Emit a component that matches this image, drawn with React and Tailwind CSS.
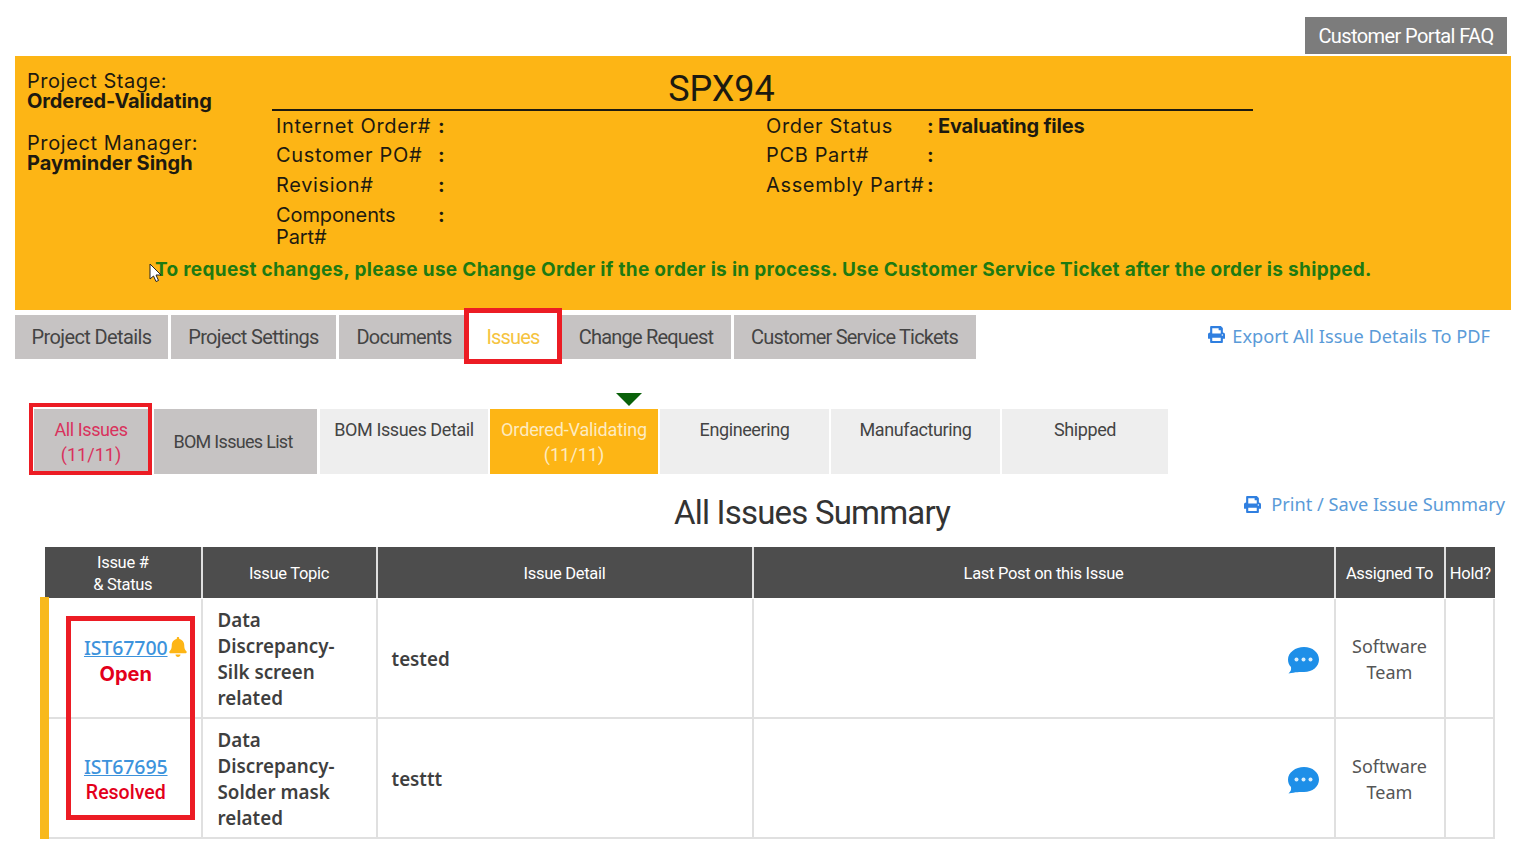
import React from "react";
import { FaPrint, FaBell } from "react-icons/fa";

const narrow = "font-['Roboto',sans-serif]";
const wide = "font-['Inter','Noto_Sans',sans-serif]";
const noto = "font-['Noto_Sans','Open_Sans',sans-serif]";
const cols = "grid grid-cols-[157.500px_175px_376px_582px_110px_49.500px]";

function InfoRow({ label, className = "", children }) {
  return (
    <div className={`flex ${className}`}>
      <span className="w-[162px] leading-[22px]">{label}</span>
      {children}
    </div>
  );
}

function Chat() {
  return (
    <svg width="33" height="28" viewBox="0 0 33 28" className="shrink-0">
      <path d="M17 1C25.5 1 32 6.500 32 13.500C32 20.500 25.500 26 17 26C12.500 26 9 26 1.500 27.500C3.500 25.500 4.500 24 4 21C2 19 1 16.500 1 13.500C1 6.500 8.500 1 17 1Z" fill="#1e8fe8" />
      <circle cx="9.500" cy="13.500" r="2" fill="#d9eefc" />
      <circle cx="16.500" cy="13.500" r="2" fill="#d9eefc" />
      <circle cx="23.500" cy="13.500" r="2" fill="#d9eefc" />
    </svg>
  );
}

function Row({ id, status, topic, detail, bell, className = "" }) {
  return (
    <div className={`${cols} h-[120px] border-b-2 border-[#e0e0e0] ${className}`}>
      <div className={`border-r-2 border-[#e0e0e0] flex flex-col items-center ${bell ? "pt-[36px]" : "pt-[35px]"} pl-[6px]`}>
        <div className="relative">
          <a className={`${noto} font-medium text-[19.500px] tracking-[-0.1px] leading-[26px] text-[#3d93dc] underline`}>{id}</a>
          {bell && <FaBell className="absolute left-[84px] top-[2px] text-[#fdb515] text-[20px]" />}
        </div>
        {status}
      </div>
      <div className={`border-r-2 border-[#e0e0e0] pl-[15px] pt-[8px] pr-2 ${noto} font-semibold text-[18.800px] leading-[26px] text-[#3f3f3f]`}>
        {topic.map((t) => <div key={t}>{t}</div>)}
      </div>
      <div className={`border-r-2 border-[#e0e0e0] pl-[14px] pt-[3px] flex items-center ${noto} font-semibold text-[18.800px] text-[#3f3f3f]`}>
        {detail}
      </div>
      <div className="border-r-2 border-[#e0e0e0] flex items-center justify-end pr-[14px] pt-[3px]">
        <Chat />
      </div>
      <div className={`border-r-2 border-[#e0e0e0] pt-[1px] flex flex-col items-center justify-center ${noto} text-[18px] leading-[26px] text-[#555555]`}>
        <div>Software</div>
        <div>Team</div>
      </div>
      <div className="border-r-2 border-[#e0e0e0]" />
    </div>
  );
}

function SubTab({ children, sub, className = "" }) {
  return (
    <div className={`h-[65px] flex flex-col items-center text-[18px] ${narrow} ${className}`}>
      <div className="leading-[25px]">{children}</div>
      {sub && <div className="leading-[25px] tracking-[0px]">{sub}</div>}
    </div>
  );
}

export default function App() {
  return (
    <div className="w-[1521px] h-[845px] overflow-hidden bg-white relative">
      <div className="flex justify-end pt-[17px] pr-[14px] h-[56px]">
        <div className={`w-[202px] h-[37px] bg-[#7c7c7c] text-white text-[20px] tracking-[-0.6px] ${narrow} flex items-center justify-center`}>
          Customer Portal FAQ
        </div>
      </div>

      <div className="mx-[15px] w-[1496px] h-[254px] bg-[#fdb515] relative text-[#1d1a10]">
        <div className="flex">
          <div className={`w-[257px] pl-[12px] pt-[15px] ${wide} text-[20px] leading-[20px]`}>
            <div className="tracking-[0.55px]">Project Stage:</div>
            <div className="font-bold tracking-[-0.1px]">Ordered-Validating</div>
            <div className="mt-[22px] tracking-[0.6px]">Project Manager:</div>
            <div className="font-bold">Payminder Singh</div>
          </div>
          <div className="w-[981px]">
            <div className={`h-[55px] border-b-2 border-[#1d1a10] flex items-end justify-center pr-[82px] text-[36px] leading-[40px] ${narrow}`}>
              SPX94
            </div>
            <div className={`flex pl-[4px] pt-[4px] ${wide} text-[20px] tracking-[0.65px]`}>
              <div className="w-[490px]">
                <InfoRow label="Internet Order#" className="h-[29px]"><b className="leading-[22px]">:</b></InfoRow>
                <InfoRow label="Customer PO#" className="h-[30px]"><b className="leading-[22px]">:</b></InfoRow>
                <InfoRow label="Revision#" className="h-[30px]"><b className="leading-[22px]">:</b></InfoRow>
                <InfoRow label={<span className="tracking-[-0.1px]">Components<br />Part#</span>}><b className="leading-[22px]">:</b></InfoRow>
              </div>
              <div>
                <div className="flex h-[29px] leading-[22px]">
                  <span className="w-[161px]">Order Status</span><b className="tracking-[-0.2px]">: Evaluating files</b>
                </div>
                <div className="flex h-[30px] leading-[22px]">
                  <span className="w-[161px]">PCB Part#</span><b>:</b>
                </div>
                <div className="flex h-[30px] leading-[22px]">
                  <span className="w-[161px]">Assembly Part#</span><b>:</b>
                </div>
              </div>
            </div>
          </div>
        </div>
        <div className={`absolute left-[140px] top-[203px] ${wide} font-bold text-[19px] tracking-[0.31px] leading-[22px] text-[#1e7a12] whitespace-nowrap`}>
          To request changes, please use Change Order if the order is in process. Use Customer Service Ticket after the order is shipped.
        </div>
        <svg width="14" height="20" viewBox="0 0 14 20" className="absolute left-[134px] top-[207px]">
          <path d="M1 1V16L4.500 13L7 18.500L9.500 17.500L7 12H12Z" fill="#fff" stroke="#222" strokeWidth="1" />
        </svg>
      </div>

      <div className="flex items-center pl-[15px] pr-[31px] mt-[5px] h-[44px]">
        <div className={`flex gap-[3px] text-[20px] tracking-[-0.8px] ${narrow} text-[#444444]`}>
          <div className="w-[153px] h-[44px] bg-[#c6c3c3] flex items-center justify-center tracking-[-0.6px]">Project Details</div>
          <div className="w-[165px] h-[44px] bg-[#c6c3c3] flex items-center justify-center tracking-[-0.65px]">Project Settings</div>
          <div className="w-[126px] h-[44px] bg-[#c6c3c3] flex items-center justify-center pl-[4px]">Documents</div>
          <div className="relative w-[90px] h-[44px] bg-white flex items-center justify-center text-[#f5c340]">
            Issues
            <div className="absolute -left-[4px] -right-[4px] -top-[7px] -bottom-[5px] border-[5px] border-[#ec1c24]" />
          </div>
          <div className="w-[170px] h-[44px] bg-[#c6c3c3] flex items-center justify-center">Change Request</div>
          <div className="w-[242px] h-[44px] bg-[#c6c3c3] flex items-center justify-center pr-[1px]">Customer Service Tickets</div>
        </div>
        <div className={`ml-auto flex items-center gap-[7px] text-[18.200px] ${noto} text-[#5b9bd8]`}>
          <FaPrint className="text-[#2f7fe0] text-[17px] -mt-[4px]" />
          Export All Issue Details To PDF
        </div>
      </div>

      <div className="relative flex gap-[2px] pl-[34px] mt-[50px] w-[1170px]">
        <div className="absolute left-[616px] -top-[16px] w-0 h-0 border-x-[13px] border-x-transparent border-t-[13px] border-t-[#0a610a]" />
        <SubTab sub="(11/11)" className="relative w-[114px] bg-[#c6c3c3] pt-[8px] text-[#d9325c] mr-[4px] tracking-[-0.4px]">
          All Issues
          <div className="absolute -left-[5px] -right-[4px] -top-[6px] -bottom-[1px] border-[4px] border-[#ec1c24]" />
        </SubTab>
        <SubTab className="w-[163px] bg-[#c6c3c3] justify-center text-[#444444] mr-[1px] tracking-[-0.7px] pr-[5px]">BOM Issues List</SubTab>
        <SubTab className="w-[168px] bg-[#eeeeee] pt-[8px] text-[#444444] tracking-[-0.4px]">BOM Issues Detail</SubTab>
        <SubTab sub="(11/11)" className="w-[168px] bg-[#fdb515] pt-[8px] text-[#fdebc0] tracking-[-0.15px]">Ordered-Validating</SubTab>
        <SubTab className="w-[169px] bg-[#eeeeee] pt-[8px] text-[#444444] tracking-[-0.4px]">Engineering</SubTab>
        <SubTab className="w-[169px] bg-[#eeeeee] pt-[8px] text-[#444444] tracking-[-0.4px]">Manufacturing</SubTab>
        <SubTab className="w-[166px] bg-[#eeeeee] pt-[8px] text-[#444444] tracking-[-0.4px]">Shipped</SubTab>
      </div>

      <div className="relative h-[73px] flex items-start justify-center pl-[103px]">
        <h1 className={`${narrow} text-[33px] tracking-[-0.8px] leading-[44px] mt-[17px] text-[#333333] font-normal`}>All Issues Summary</h1>
        <div className={`absolute right-[16px] top-[17px] flex items-center gap-[10px] text-[18.200px] ${noto} text-[#5b9bd8]`}>
          <FaPrint className="text-[#2f7fe0] text-[17px]" />
          Print / Save Issue Summary
        </div>
      </div>

      <div className="relative ml-[45px] w-[1450px]">
        <div className={`${cols} h-[51px] bg-[#4d4d4d] text-white text-[16.500px] tracking-[-0.3px] ${narrow} text-center`}>
          <div className="border-r-2 border-[#e0e0e0] flex flex-col justify-center leading-[22px] pt-[2px]"><div>Issue #</div><div>&amp; Status</div></div>
          <div className="border-r-2 border-[#e0e0e0] flex items-center justify-center pt-[4px]">Issue Topic</div>
          <div className="border-r-2 border-[#e0e0e0] flex items-center justify-center pt-[4px]">Issue Detail</div>
          <div className="border-r-2 border-[#e0e0e0] flex items-center justify-center pt-[4px]">Last Post on this Issue</div>
          <div className="border-r-2 border-[#e0e0e0] flex items-center justify-center pt-[4px]">Assigned To</div>
          <div className="flex items-center justify-center pt-[4px]">Hold?</div>
        </div>
        <div className="absolute -left-[5px] top-[50px] w-[9px] h-[242px] bg-[#f8b91c]" />
        <Row
          id="IST67700"
          bell
          className="mt-[1px]"
          detail="tested"
          topic={["Data", "Discrepancy-", "Silk screen", "related"]}
          status={<div className={`${wide} font-bold text-[#e3001b] text-[20px] leading-[26px]`}>Open</div>}
        />
        <Row
          id="IST67695"
          detail="testtt"
          topic={["Data", "Discrepancy-", "Solder mask", "related"]}
          status={<div className={`font-['Roboto',sans-serif] font-medium text-[#e3001b] text-[19.500px] leading-[24px] pt-[1px]`}>Resolved</div>}
        />
        <div className="absolute left-[21px] top-[69px] w-[129px] h-[204px] border-[5px] border-[#ec1c24]" />
      </div>
    </div>
  );
}
